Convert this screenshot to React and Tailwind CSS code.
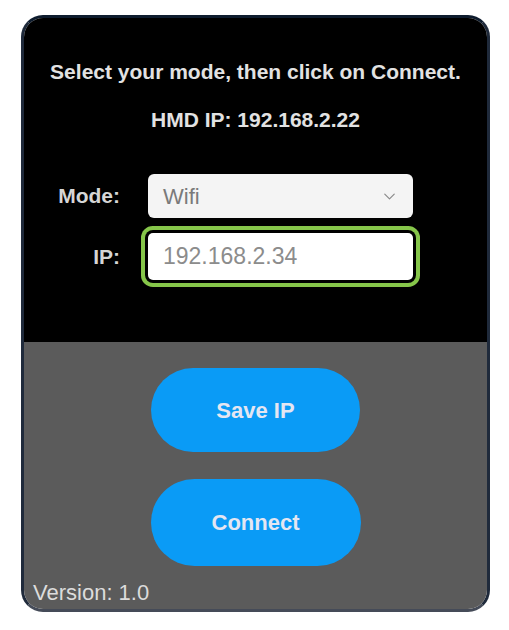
import { ChevronDown } from 'lucide-react';

const font = { fontFamily: '"Liberation Sans", Arial, sans-serif' };

export default function App() {
  return (
    <div className="w-full h-[630px] bg-white pt-[15px] pl-[21px]" style={font}>
      <div className="w-[469px] h-[597px] rounded-[22px] border-[3px] border-t-[#0e1c2e] border-x-[#1f2a3b] border-b-[#454b58] overflow-hidden flex flex-col">
        {/* top part */}
        <div className="bg-black h-[325px] flex flex-col items-center pt-[42px]">
          <p className="text-[21px] font-bold text-[#e2e2e2] leading-6">
            Select your mode, then click on Connect.
          </p>
          <p className="mt-[24px] text-[21px] font-bold text-[#e2e2e2] leading-6">
            HMD IP: 192.168.2.22
          </p>

          <div className="mt-[42px] w-full grid grid-cols-[96px_265px] gap-x-[28px] gap-y-[15px] items-center">
            <span className="text-right text-[21px] font-bold text-[#d6d6d6]">Mode:</span>
            <div className="h-[44px] rounded-[6px] bg-[#f4f4f4] flex items-center justify-between pl-[15px] pr-[14px]">
              <span className="text-[22px] text-[#7a7a7a]">Wifi</span>
              <ChevronDown size={19} strokeWidth={1.5} className="text-[#8a8a8a]" />
            </div>
            <span className="text-right text-[21px] font-bold text-[#d6d6d6]">IP:</span>
            <div className="h-[47px] rounded-[5px] bg-white flex items-center pl-[15px] ring-4 ring-[#86c64a] ring-offset-[3px] ring-offset-black">
              <span className="text-[23px] text-[#8c8c8c]">192.168.2.34</span>
            </div>
          </div>
        </div>

        {/* bottom part */}
        <div className="flex-1 bg-[#5b5b5b] flex flex-col items-center pt-[26px]">
          <button className="w-[209px] h-[84px] rounded-full bg-[#0a9bf6] text-[22px] font-bold text-[#e4e6f2]">
            Save IP
          </button>
          <button className="mt-[27px] w-[210px] h-[87px] rounded-full bg-[#0a9bf6] text-[22px] font-bold text-[#e4e6f2]">
            Connect
          </button>
          <p className="self-start ml-[9px] mt-[10px] text-[22px] text-[#dcdcdc]">Version: 1.0</p>
        </div>
      </div>
    </div>
  );
}
